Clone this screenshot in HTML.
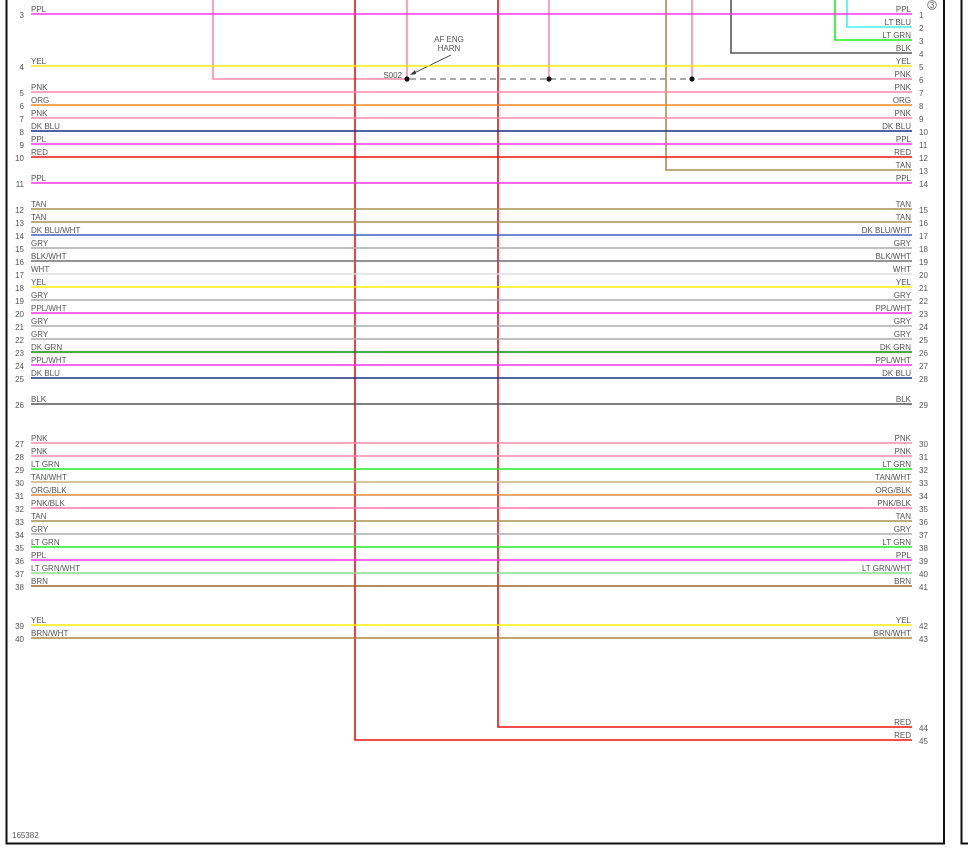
<!DOCTYPE html>
<html><head><meta charset="utf-8"><style>
html,body{margin:0;padding:0;background:#fff;width:968px;height:850px;overflow:hidden}
svg{display:block}
text{font-family:"Liberation Sans",Arial,sans-serif;font-size:8px;fill:#555}
.l{stroke-width:1.6;fill:none}
</style></head><body>
<svg width="968" height="850" viewBox="0 0 968 850" xmlns="http://www.w3.org/2000/svg">
<rect x="0" y="0" width="968" height="850" fill="#fff"/>
<path d="M6.5 0V843.5H944V0" stroke="#111" stroke-width="2" fill="none"/>
<path d="M961.5 0V843.5H968" stroke="#111" stroke-width="2" fill="none"/>
<text x="12" y="838" font-size="7">165382</text>
<circle cx="932" cy="5" r="4.3" fill="none" stroke="#666" stroke-width="0.8"/>
<text x="932" y="8" font-size="7" text-anchor="middle">3</text>

<path class="l" stroke="#ff8aa8" d="M213 0V79H407"/>
<path class="l" stroke="#ff8aa8" d="M407 0V79"/>
<path class="l" stroke="#ff8aa8" d="M549 0V79"/>
<path class="l" stroke="#ff8aa8" d="M692 0V79"/>
<path class="l" stroke="#ff8aa8" d="M698 79H912"/>
<path stroke="#555" stroke-width="1" stroke-dasharray="6,4" d="M410 79H690"/>
<circle cx="407" cy="79" r="2.6" fill="#111"/>
<circle cx="549" cy="79" r="2.6" fill="#111"/>
<circle cx="692" cy="79" r="2.6" fill="#111"/>
<path class="l" stroke="#a89050" d="M666 0V170H912"/>
<path class="l" stroke="#555" d="M731 0V53H912"/>
<path class="l" stroke="#22ee22" d="M835 0V40H912"/>
<path class="l" stroke="#44f0f0" d="M847 0V27H912"/>
<path class="l" stroke="#ee1111" d="M355 0V740H912"/>
<path class="l" stroke="#ee1111" d="M498 0V727H912"/>

<text x="402" y="78" text-anchor="end">S002</text>
<text x="449" y="42" text-anchor="middle">AF ENG</text>
<text x="449" y="51" text-anchor="middle">HARN</text>
<path d="M451 55L412 74" stroke="#333" stroke-width="0.8"/>
<path d="M410 75L415 70L416 74Z" fill="#333"/>

<g class="l">
<path stroke="#ff33ee" d="M31 14H912"/>
<path stroke="#ffee00" d="M31 66H912"/>
<path stroke="#ff8aa8" d="M31 92H912"/>
<path stroke="#ff8822" d="M31 105H912"/>
<path stroke="#ff8aa8" d="M31 118H912"/>
<path stroke="#1a2f80" d="M31 131H912"/>
<path stroke="#ff33ee" d="M31 144H912"/>
<path stroke="#ee1111" d="M31 157H912"/>
<path stroke="#ff33ee" d="M31 183H912"/>
<path stroke="#a89050" d="M31 209H912"/>
<path stroke="#a89050" d="M31 222H912"/>
<path stroke="#4060c0" d="M31 235H912"/>
<path stroke="#aaaaaa" d="M31 248H912"/>
<path stroke="#707070" d="M31 261H912"/>
<path stroke="#dddddd" d="M31 274H912"/>
<path stroke="#ffee00" d="M31 287H912"/>
<path stroke="#aaaaaa" d="M31 300H912"/>
<path stroke="#ff33ee" d="M31 313H912"/>
<path stroke="#aaaaaa" d="M31 326H912"/>
<path stroke="#aaaaaa" d="M31 339H912"/>
<path stroke="#118811" d="M31 352H912"/>
<path stroke="#ff33ee" d="M31 365H912"/>
<path stroke="#1a2f80" d="M31 378H912"/>
<path stroke="#555555" d="M31 404H912"/>
<path stroke="#ff8aa8" d="M31 443H912"/>
<path stroke="#ff8aa8" d="M31 456H912"/>
<path stroke="#22ee22" d="M31 469H912"/>
<path stroke="#c8b080" d="M31 482H912"/>
<path stroke="#e08840" d="M31 495H912"/>
<path stroke="#ff77aa" d="M31 508H912"/>
<path stroke="#a89050" d="M31 521H912"/>
<path stroke="#aaaaaa" d="M31 534H912"/>
<path stroke="#22ee22" d="M31 547H912"/>
<path stroke="#ff33ee" d="M31 560H912"/>
<path stroke="#88dd88" d="M31 573H912"/>
<path stroke="#996622" d="M31 586H912"/>
<path stroke="#ffee00" d="M31 625H912"/>
<path stroke="#aa8833" d="M31 638H912"/>
</g>

<g>
<text x="31" y="12">PPL</text><text x="24" y="18" text-anchor="end">3</text>
<text x="31" y="64">YEL</text><text x="24" y="70" text-anchor="end">4</text>
<text x="31" y="90">PNK</text><text x="24" y="96" text-anchor="end">5</text>
<text x="31" y="103">ORG</text><text x="24" y="109" text-anchor="end">6</text>
<text x="31" y="116">PNK</text><text x="24" y="122" text-anchor="end">7</text>
<text x="31" y="129">DK BLU</text><text x="24" y="135" text-anchor="end">8</text>
<text x="31" y="142">PPL</text><text x="24" y="148" text-anchor="end">9</text>
<text x="31" y="155">RED</text><text x="24" y="161" text-anchor="end">10</text>
<text x="31" y="181">PPL</text><text x="24" y="187" text-anchor="end">11</text>
<text x="31" y="207">TAN</text><text x="24" y="213" text-anchor="end">12</text>
<text x="31" y="220">TAN</text><text x="24" y="226" text-anchor="end">13</text>
<text x="31" y="233">DK BLU/WHT</text><text x="24" y="239" text-anchor="end">14</text>
<text x="31" y="246">GRY</text><text x="24" y="252" text-anchor="end">15</text>
<text x="31" y="259">BLK/WHT</text><text x="24" y="265" text-anchor="end">16</text>
<text x="31" y="272">WHT</text><text x="24" y="278" text-anchor="end">17</text>
<text x="31" y="285">YEL</text><text x="24" y="291" text-anchor="end">18</text>
<text x="31" y="298">GRY</text><text x="24" y="304" text-anchor="end">19</text>
<text x="31" y="311">PPL/WHT</text><text x="24" y="317" text-anchor="end">20</text>
<text x="31" y="324">GRY</text><text x="24" y="330" text-anchor="end">21</text>
<text x="31" y="337">GRY</text><text x="24" y="343" text-anchor="end">22</text>
<text x="31" y="350">DK GRN</text><text x="24" y="356" text-anchor="end">23</text>
<text x="31" y="363">PPL/WHT</text><text x="24" y="369" text-anchor="end">24</text>
<text x="31" y="376">DK BLU</text><text x="24" y="382" text-anchor="end">25</text>
<text x="31" y="402">BLK</text><text x="24" y="408" text-anchor="end">26</text>
<text x="31" y="441">PNK</text><text x="24" y="447" text-anchor="end">27</text>
<text x="31" y="454">PNK</text><text x="24" y="460" text-anchor="end">28</text>
<text x="31" y="467">LT GRN</text><text x="24" y="473" text-anchor="end">29</text>
<text x="31" y="480">TAN/WHT</text><text x="24" y="486" text-anchor="end">30</text>
<text x="31" y="493">ORG/BLK</text><text x="24" y="499" text-anchor="end">31</text>
<text x="31" y="506">PNK/BLK</text><text x="24" y="512" text-anchor="end">32</text>
<text x="31" y="519">TAN</text><text x="24" y="525" text-anchor="end">33</text>
<text x="31" y="532">GRY</text><text x="24" y="538" text-anchor="end">34</text>
<text x="31" y="545">LT GRN</text><text x="24" y="551" text-anchor="end">35</text>
<text x="31" y="558">PPL</text><text x="24" y="564" text-anchor="end">36</text>
<text x="31" y="571">LT GRN/WHT</text><text x="24" y="577" text-anchor="end">37</text>
<text x="31" y="584">BRN</text><text x="24" y="590" text-anchor="end">38</text>
<text x="31" y="623">YEL</text><text x="24" y="629" text-anchor="end">39</text>
<text x="31" y="636">BRN/WHT</text><text x="24" y="642" text-anchor="end">40</text>
</g>

<g text-anchor="end">
<text x="911" y="12">PPL</text><text x="911" y="25">LT BLU</text><text x="911" y="38">LT GRN</text><text x="911" y="51">BLK</text>
<text x="911" y="64">YEL</text><text x="911" y="77">PNK</text><text x="911" y="90">PNK</text><text x="911" y="103">ORG</text>
<text x="911" y="116">PNK</text><text x="911" y="129">DK BLU</text><text x="911" y="142">PPL</text><text x="911" y="155">RED</text>
<text x="911" y="168">TAN</text><text x="911" y="181">PPL</text><text x="911" y="207">TAN</text><text x="911" y="220">TAN</text>
<text x="911" y="233">DK BLU/WHT</text><text x="911" y="246">GRY</text><text x="911" y="259">BLK/WHT</text><text x="911" y="272">WHT</text>
<text x="911" y="285">YEL</text><text x="911" y="298">GRY</text><text x="911" y="311">PPL/WHT</text><text x="911" y="324">GRY</text>
<text x="911" y="337">GRY</text><text x="911" y="350">DK GRN</text><text x="911" y="363">PPL/WHT</text><text x="911" y="376">DK BLU</text>
<text x="911" y="402">BLK</text><text x="911" y="441">PNK</text><text x="911" y="454">PNK</text><text x="911" y="467">LT GRN</text>
<text x="911" y="480">TAN/WHT</text><text x="911" y="493">ORG/BLK</text><text x="911" y="506">PNK/BLK</text><text x="911" y="519">TAN</text>
<text x="911" y="532">GRY</text><text x="911" y="545">LT GRN</text><text x="911" y="558">PPL</text><text x="911" y="571">LT GRN/WHT</text>
<text x="911" y="584">BRN</text><text x="911" y="623">YEL</text><text x="911" y="636">BRN/WHT</text>
<text x="911" y="725">RED</text><text x="911" y="738">RED</text>
</g>
<g>
<text x="919" y="18">1</text><text x="919" y="31">2</text><text x="919" y="44">3</text><text x="919" y="57">4</text>
<text x="919" y="70">5</text><text x="919" y="83">6</text><text x="919" y="96">7</text><text x="919" y="109">8</text>
<text x="919" y="122">9</text><text x="919" y="135">10</text><text x="919" y="148">11</text><text x="919" y="161">12</text>
<text x="919" y="174">13</text><text x="919" y="187">14</text><text x="919" y="213">15</text><text x="919" y="226">16</text>
<text x="919" y="239">17</text><text x="919" y="252">18</text><text x="919" y="265">19</text><text x="919" y="278">20</text>
<text x="919" y="291">21</text><text x="919" y="304">22</text><text x="919" y="317">23</text><text x="919" y="330">24</text>
<text x="919" y="343">25</text><text x="919" y="356">26</text><text x="919" y="369">27</text><text x="919" y="382">28</text>
<text x="919" y="408">29</text><text x="919" y="447">30</text><text x="919" y="460">31</text><text x="919" y="473">32</text>
<text x="919" y="486">33</text><text x="919" y="499">34</text><text x="919" y="512">35</text><text x="919" y="525">36</text>
<text x="919" y="538">37</text><text x="919" y="551">38</text><text x="919" y="564">39</text><text x="919" y="577">40</text>
<text x="919" y="590">41</text><text x="919" y="629">42</text><text x="919" y="642">43</text>
<text x="919" y="731">44</text><text x="919" y="744">45</text>
</g>
</svg>
</body></html>
